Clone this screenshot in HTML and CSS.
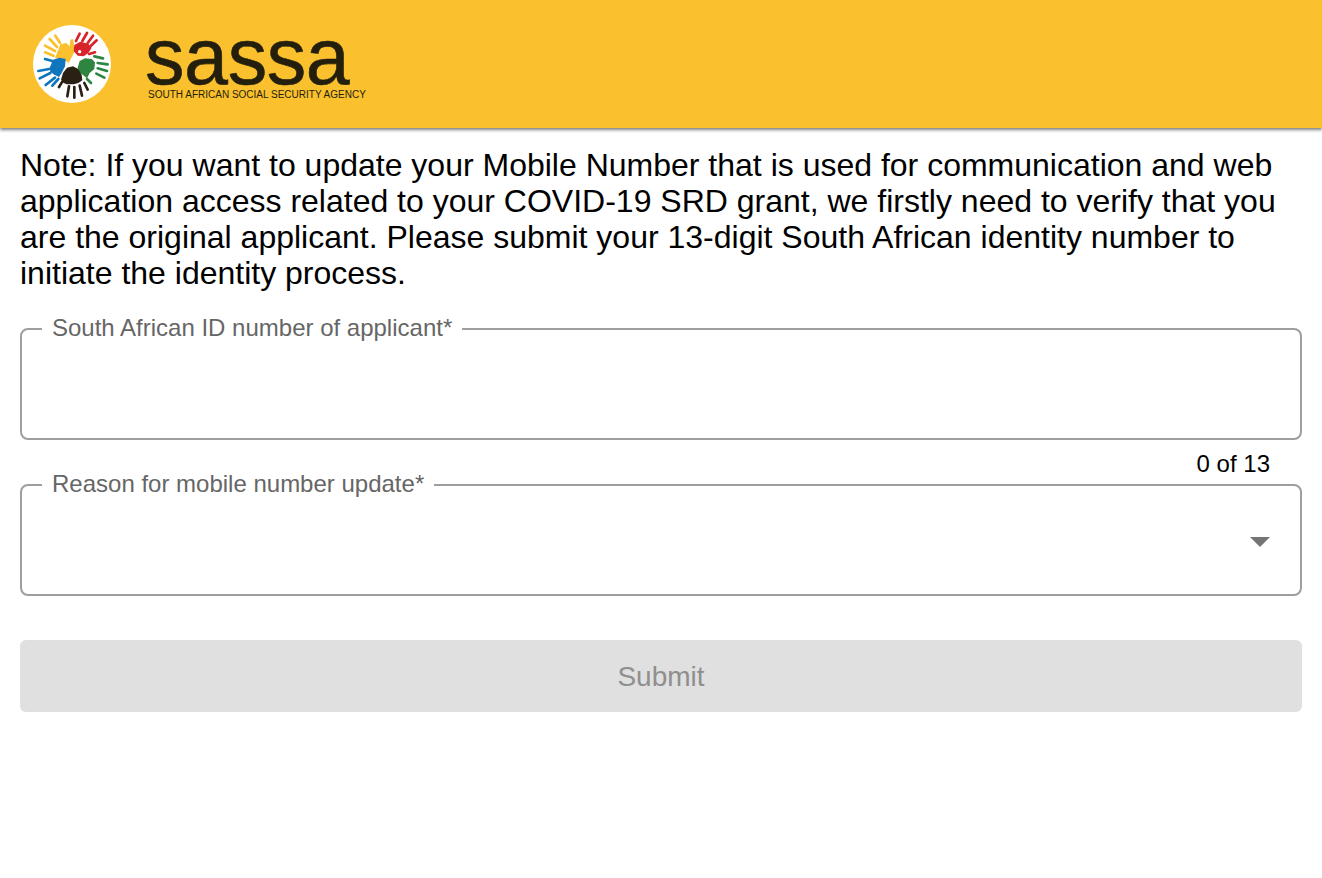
FILE: index.html
```html
<!DOCTYPE html>
<html lang="en">
<head>
<meta charset="utf-8">
<title>SASSA</title>
<link rel="stylesheet" href="styles.css">
</head>
<body>
<header class="topbar">
  <svg class="emblem" viewBox="38 48 234 234" aria-hidden="true">
    <circle cx="155" cy="165" r="117" class="disc"/>
    <g class="hand yellow">
      <path class="palm" d="M104 148 120 106 138 102 148 112 150 92 158 90 164 125 145 162 128 150Z"/>
      <path class="fingers" d="M105 80 119 102M88 90 110 114M74 110 104 126M74 130 100 140"/>
    </g>
    <g class="hand red">
      <path class="palm" d="M160 126 162 108 180 98 204 104 214 116 204 132 190 142 172 140Z"/>
      <path class="fingers" d="M178 74 167 96M200 72 186 96M218 80 202 102M229 94 212 110M224 130 206 135"/>
      <circle class="disc" cx="178" cy="128" r="5"/>
    </g>
    <g class="hand green">
      <path class="palm" d="M172 176 178 156 194 148 214 150 224 160 222 180 208 192 200 208 188 198 176 190Z"/>
      <path class="fingers" d="M222 142 248 148M232 162 262 166M232 178 260 186M228 194 252 206M200 210 212 222"/>
    </g>
    <g class="hand black">
      <path class="palm" d="M122 212 128 192 140 176 158 172 174 180 184 198 186 214 174 222 160 226 140 226 130 222Z"/>
      <path class="fingers" d="M146 232 141 262M162 234 162 266M178 230 185 260M192 222 202 242M126 218 116 234"/>
    </g>
    <g class="hand blue">
      <path class="palm" d="M88 176 98 152 118 146 136 150 134 172 124 192 116 204 100 196 90 188Z"/>
      <path class="fingers" d="M54 186 86 180M58 208 90 192M76 228 104 206M96 230 114 210M74 150 96 156"/>
    </g>
  </svg>
  <div class="brand">
    <div class="wordmark">sassa</div>
    <div class="tagline">SOUTH AFRICAN SOCIAL SECURITY AGENCY</div>
  </div>
</header>
<main class="content">
  <p class="note">Note: If you want to update your Mobile Number that is used for communication and web application access related to your COVID-19 SRD grant, we firstly need to verify that you are the original applicant. Please submit your 13-digit South African identity number to initiate the identity process.</p>
  <form class="form">
    <fieldset class="field">
      <legend class="label">South African ID number of applicant*</legend>
      <input class="control" type="text" aria-label="South African ID number of applicant">
    </fieldset>
    <div class="counter">0 of 13</div>
    <fieldset class="field">
      <legend class="label">Reason for mobile number update*</legend>
      <div class="control select"><span class="caret"></span></div>
    </fieldset>
    <button class="submit" type="button" disabled>Submit</button>
  </form>
</main>
</body>
</html>
```
FILE: styles.css
```css
* { box-sizing: border-box; }
html, body { margin: 0; padding: 0; }
body {
  background: #fff;
  color: #000;
  font-family: "Liberation Sans", Arial, sans-serif;
  min-height: 878px;
}
.topbar {
  height: 128px;
  background: #fbc02d;
  box-shadow: 0 2px 3px rgba(0,0,0,.5);
  display: flex;
  align-items: flex-start;
  padding: 25px 0 0 33px;
}
.emblem { width: 78px; height: 78px; flex: none; }
.disc { fill: #fff; }
.palm { fill: currentColor; }
.fingers { fill: none; stroke: currentColor; stroke-width: 8; stroke-linecap: round; }
.yellow { color: #fbc02d; }
.red { color: #d8232a; }
.green { color: #2e8540; }
.black { color: #2a2013; }
.blue { color: #0f75bc; }
.brand { margin-left: 35px; color: #231f0c; }
.wordmark {
  margin-left: -1px;
  font-size: 79px;
  line-height: 64px;
  letter-spacing: -.4px;
  height: 64px;
  -webkit-text-stroke: .6px #231f0c;
}
.tagline {
  font-size: 10px;
  line-height: 12px;
  margin-left: 2px;
  white-space: nowrap;
}
.content { padding: 19px 20px 0; }
.note {
  margin: 0;
  font-size: 32px;
  line-height: 36px;
}
.form { display: flex; flex-direction: column; margin-top: 26px; }
.field {
  margin: 0;
  padding: 0;
  border: 2px solid #9e9e9e;
  border-radius: 8px;
  min-width: 0;
}
.label {
  margin-left: 20px;
  padding: 0 10px 2px 10px;
  font-size: 24px;
  line-height: 22px;
  color: #666;
}
.control {
  display: block;
  width: 100%;
  height: 97px;
  border: 0;
  background: transparent;
  outline: 0;
  padding: 0 32px;
  font: inherit;
}
.select { display: flex; align-items: center; justify-content: flex-end; padding: 0 30px 8px 0; }
.caret {
  width: 0;
  height: 0;
  border-left: 10px solid transparent;
  border-right: 10px solid transparent;
  border-top: 10px solid #757575;
}
.counter {
  height: 44px;
  margin-bottom: -11px;
  padding: 11px 32px 0 0;
  text-align: right;
  font-size: 24px;
  line-height: 26px;
}
.submit {
  margin-top: 44px;
  height: 72px;
  border: 0;
  border-radius: 6px;
  padding: 2px 0 0;
  background: #e0e0e0;
  color: #8f8f8f;
  font: inherit;
  font-size: 28px;
}
```
